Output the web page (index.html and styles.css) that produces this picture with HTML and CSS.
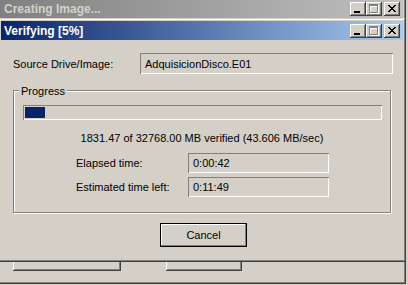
FILE: index.html
```html
<!DOCTYPE html>
<html lang="en">

<head>
    <meta charset="UTF-8">
    <title>Verifying [5%]</title>
    <link rel="stylesheet" href="styles.css">
</head>

<body>
    <div class="desktop">
        <!-- window behind -->
        <div class="window back">
            <div class="titlebar inactive">
                <span class="title">Creating Image...</span>
                <div class="caption-buttons">
                    <span class="cap-btn"><svg width="16" height="14"><rect x="4" y="9" width="6" height="2" fill="#000"/></svg></span>
                    <span class="cap-btn"><svg width="16" height="14"><path d="M4 3h9v9h-9z M5 5v6h7v-6z" fill="#fff" fill-rule="evenodd"/><path d="M3 2h9v9h-9z M4 4v6h7v-6z" fill="#808080" fill-rule="evenodd"/></svg></span>
                    <span class="cap-btn close"><svg width="16" height="14"><path d="M4 3h2v1h-2z M10 3h2v1h-2z M5 4h2v1h-2z M9 4h2v1h-2z M6 5h4v1h-4z M7 6h2v1h-2z M6 7h4v1h-4z M5 8h2v1h-2z M9 8h2v1h-2z M4 9h2v1h-2z M10 9h2v1h-2z" fill="#000"/></svg></span>
                </div>
            </div>
            <div class="back-body">
                <button class="btn wide">Image Summary</button>
                <button class="btn">Close</button>
            </div>
        </div>

        <!-- verify dialog -->
        <div class="window dialog">
            <div class="titlebar">
                <span class="title">Verifying [5%]</span>
                <div class="caption-buttons">
                    <span class="cap-btn"><svg width="16" height="14"><rect x="4" y="9" width="6" height="2" fill="#000"/></svg></span>
                    <span class="cap-btn"><svg width="16" height="14"><path d="M4 3h9v9h-9z M5 5v6h7v-6z" fill="#fff" fill-rule="evenodd"/><path d="M3 2h9v9h-9z M4 4v6h7v-6z" fill="#808080" fill-rule="evenodd"/></svg></span>
                    <span class="cap-btn close"><svg width="16" height="14"><path d="M4 3h2v1h-2z M10 3h2v1h-2z M5 4h2v1h-2z M9 4h2v1h-2z M6 5h4v1h-4z M7 6h2v1h-2z M6 7h4v1h-4z M5 8h2v1h-2z M9 8h2v1h-2z M4 9h2v1h-2z M10 9h2v1h-2z" fill="#000"/></svg></span>
                </div>
            </div>

            <div class="dialog-body">
                <div class="field-row">
                    <span class="field-label">Source Drive/Image:</span>
                    <div class="field-box source">AdquisicionDisco.E01</div>
                </div>

                <div class="group">
                    <span class="group-title">Progress</span>
                    <div class="progress">
                        <div class="progress-fill"></div>
                    </div>
                    <div class="stats">1831.47 of 32768.00 MB verified (43.606 MB/sec)</div>
                    <div class="time-row">
                        <span class="time-label">Elapsed time:</span>
                        <div class="field-box time">0:00:42</div>
                    </div>
                    <div class="time-row">
                        <span class="time-label">Estimated time left:</span>
                        <div class="field-box time">0:11:49</div>
                    </div>
                </div>

                <button class="btn default">Cancel</button>
            </div>
        </div>
    </div>
</body>

</html>
```

FILE: styles.css
```css
* {
    box-sizing: border-box;
}

body {
    margin: 0;
    background: #d4d0c8;
    font-family: "Liberation Sans", Arial, sans-serif;
    font-size: 11px;
    color: #000;
}

.desktop {
    position: relative;
    width: 408px;
    height: 285px;
    overflow: hidden;
}

.window {
    position: absolute;
    display: flex;
    flex-direction: column;
    padding: 3px;
    background: #d4d0c8;
    box-shadow: inset -1px -1px #404040, inset 1px 1px #d4d0c8, inset -2px -2px #808080, inset 2px 2px #fff;
}

.back {
    left: -3px;
    top: -3px;
    width: 409px;
    height: 287px;
}

.dialog {
    left: -2px;
    top: 18px;
    width: 408px;
    height: 244px;
}

.titlebar {
    display: flex;
    align-items: center;
    height: 19px;
    padding: 0 3px 0 3px;
    font-size: 12px;
    font-weight: bold;
    color: #fff;
    background: linear-gradient(to right, #0a246a, #a6caf0);
}

.titlebar.inactive {
    height: 18px;
    padding-left: 4px;
    color: #d4d0c8;
    background: linear-gradient(to right, #808080, #c0c0c0);
}

.caption-buttons {
    display: flex;
    margin-left: auto;
}

.cap-btn {
    display: block;
    width: 16px;
    height: 14px;
    background: #d4d0c8;
    box-shadow: inset -1px -1px #404040, inset 1px 1px #fff, inset -2px -2px #808080, inset 2px 2px #d4d0c8;
}

.cap-btn svg {
    display: block;
}

.cap-btn.close {
    margin-left: 2px;
}

/* back window */
.back-body {
    flex: 1;
    display: flex;
    align-items: flex-end;
    gap: 45px;
    padding: 0 0 10px 13px;
}

.back-body .btn {
    padding-bottom: 7px;
}

.btn {
    height: 23px;
    width: 76px;
    padding: 0;
    border: none;
    background: #d4d0c8;
    font-family: inherit;
    font-size: 11px;
    color: #000;
    box-shadow: inset -1px -1px #404040, inset 1px 1px #fff, inset -2px -2px #808080, inset 2px 2px #d4d0c8;
}

.btn.wide {
    width: 108px;
}

/* dialog */
.dialog-body {
    flex: 1;
    display: flex;
    flex-direction: column;
    align-items: flex-start;
    padding: 13px 0 0 12px;
}

.field-row {
    display: flex;
    align-items: center;
}

.field-label {
    width: 127px;
}

.field-box {
    display: flex;
    align-items: center;
    height: 21px;
    padding: 0 5px;
    box-shadow: inset 1px 1px #808080, inset -1px -1px #fff;
}

.field-box.source {
    width: 253px;
}

.group {
    display: flex;
    flex-direction: column;
    align-items: flex-start;
    margin-top: 16px;
    width: 378px;
    height: 123px;
    border: 1px solid #808080;
    box-shadow: 1px 1px #fff, inset 1px 1px #fff;
}

.group-title {
    margin: -6px 0 0 5px;
    padding: 0 2px;
    line-height: 13px;
    background: #d4d0c8;
}

.progress {
    margin: 7px 0 0 9px;
    width: 359px;
    height: 15px;
    padding: 2px;
    box-shadow: inset 1px 1px #808080, inset -1px -1px #fff;
}

.progress-fill {
    width: 20px;
    height: 11px;
    background: #0a246a;
}

.stats {
    align-self: stretch;
    margin-top: 12px;
    line-height: 13px;
    text-align: center;
}

.time-row {
    display: flex;
    align-items: center;
    margin: 8px 0 0 62px;
}

.time-row + .time-row {
    margin-top: 4px;
}

.time-label {
    width: 112px;
}

.field-box.time {
    width: 141px;
    height: 20px;
}

.btn.default {
    margin: 10px 0 0 147px;
    width: 87px;
    height: 24px;
    border: 1px solid #000;
    box-shadow: inset -1px -1px #808080, inset 1px 1px #fff;
}
```
